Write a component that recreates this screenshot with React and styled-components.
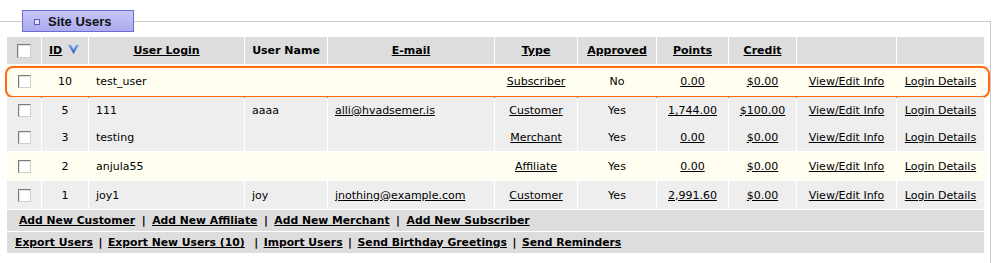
import React from "react";
import styled, { createGlobalStyle } from "styled-components";

const Global = createGlobalStyle`
  html, body { margin: 0; padding: 0; background: #fff; }
  body { font-family: "DejaVu Sans", Verdana, sans-serif; font-size: 11px; color: #000; }
`;

const COLS = "34px 46px 155px 82px 166px 82px 78px 71px 67px 99px 87px";

const Fieldset = styled.fieldset`
  margin: 10px 0 0 0;
  width: 991px;
  box-sizing: border-box;
  border: 1px solid #cccccc;
  border-left: none;
  border-bottom: none;
  padding: 5px 6px 20px 7px;
  min-width: 0;
`;

const Legend = styled.legend`
  margin-left: 15px;
  box-sizing: border-box;
  height: 22px;
  padding: 0 21px 0 11px;
  display: flex;
  align-items: center;
  gap: 8px;
  border: 1px solid #6c6cd4;
  background: linear-gradient(#c6c6f8, #ababee);
  font-family: "Liberation Sans", Arial, sans-serif;
  font-weight: bold;
  font-size: 13px;
  color: #111;
`;

const LegendIcon = styled.span`
  width: 6px;
  height: 6px;
  box-sizing: border-box;
  border: 1px solid #5a5ab8;
  background: #e4e4ff;
  margin-top: 2px;
`;

const Table = styled.div`
  width: 977px;
  display: flex;
  flex-direction: column;
`;

const Row = styled.div`
  position: relative;
  display: grid;
  grid-template-columns: ${COLS};
  column-gap: 1px;
  height: ${(p) => p.$h}px;
  margin-top: ${(p) => p.$gap}px;
  ${(p) =>
    p.$highlight &&
    `
    &::after {
      content: "";
      position: absolute;
      left: -2px;
      right: -6px;
      top: 1px;
      bottom: -1px;
      border: 2px solid #ff6a12;
      border-radius: 8px;
      pointer-events: none;
    }
  `}
`;

const Cell = styled.div`
  display: flex;
  align-items: center;
  justify-content: ${(p) => (p.$align === "left" ? "flex-start" : "center")};
  padding: ${(p) => (p.$align === "left" ? "0 0 0 7px" : "0")};
  background: ${(p) => p.$bg};
  font-weight: ${(p) => (p.$head ? "bold" : "normal")};
  white-space: nowrap;
  overflow: hidden;
`;

const Link = styled.a`
  color: #000;
  text-decoration: underline;
  cursor: pointer;
`;

const Check = styled.span`
  display: inline-block;
  width: ${(p) => (p.$big ? 14 : 13)}px;
  height: ${(p) => (p.$big ? 14 : 13)}px;
  box-sizing: border-box;
  background: #fff;
  border: 1px solid;
  border-color: #7c7c7c #cfcfcf #cfcfcf #7c7c7c;
  box-shadow: inset 1px 1px 0 #e2e2e2;
`;

const Sort = styled.svg`
  margin-left: 6px;
  margin-top: -2px;
`;

const FootRow = styled.div`
  margin-top: 1px;
  height: 21px;
  background: #dddddd;
  display: flex;
  align-items: center;
  padding-left: ${(p) => p.$indent}px;
  font-weight: bold;
  font-size: 10.8px;
  white-space: pre;
`;

const Sep = styled.span`
  margin: 0 ${(p) => p.$m}px 0 ${(p) => (p.$wide ? p.$m + 4 : p.$m)}px;
`;

const HEAD = "#dddddd";
const GREY = "#eeeeee";
const CREAM = "#fffef0";

const rows = [
  { id: "10", login: "test_user", name: "", email: "", type: "Subscriber", ok: "No", pts: "0.00", cr: "$0.00", bg: CREAM, h: 32, gap: 1, hl: true },
  { id: "5", login: "111", name: "aaaa", email: "alli@hvadsemer.is", type: "Customer", ok: "Yes", pts: "1,744.00", cr: "$100.00", bg: GREY, h: 27, gap: 0 },
  { id: "3", login: "testing", name: "", email: "", type: "Merchant", ok: "Yes", pts: "0.00", cr: "$0.00", bg: GREY, h: 27, gap: 0 },
  { id: "2", login: "anjula55", name: "", email: "", type: "Affiliate", ok: "Yes", pts: "0.00", cr: "$0.00", bg: CREAM, h: 28, gap: 1 },
  { id: "1", login: "joy1", name: "joy", email: "jnothing@example.com", type: "Customer", ok: "Yes", pts: "2,991.60", cr: "$0.00", bg: GREY, h: 28, gap: 1 },
];

function SortIcon() {
  return (
    <Sort width="11" height="9" viewBox="0 0 11 9">
      <defs>
        <linearGradient id="sg" x1="0" y1="0" x2="0" y2="1">
          <stop offset="0" stopColor="#7fa6e8" />
          <stop offset="1" stopColor="#2a5cc0" />
        </linearGradient>
      </defs>
      <path d="M0 0 L3.2 0 L5.5 4.6 L7.8 0 L11 0 L5.5 9 Z" fill="url(#sg)" />
    </Sort>
  );
}

export default function App() {
  const foot1 = ["Add New Customer", "Add New Affiliate", "Add New Merchant", "Add New Subscriber"];
  const foot2 = ["Export Users", "Export New Users (10)", "Import Users", "Send Birthday Greetings", "Send Reminders"];
  return (
    <>
      <Global />
      <Fieldset>
        <Legend>
          <LegendIcon />
          Site Users
        </Legend>
        <Table>
          <Row $h={27} $gap={0}>
            <Cell $bg={HEAD} $head><Check $big /></Cell>
            <Cell $bg={HEAD} $head $align="left"><Link>ID</Link><SortIcon /></Cell>
            <Cell $bg={HEAD} $head><Link>User Login</Link></Cell>
            <Cell $bg={HEAD} $head>User Name</Cell>
            <Cell $bg={HEAD} $head><Link>E-mail</Link></Cell>
            <Cell $bg={HEAD} $head><Link>Type</Link></Cell>
            <Cell $bg={HEAD} $head><Link>Approved</Link></Cell>
            <Cell $bg={HEAD} $head><Link>Points</Link></Cell>
            <Cell $bg={HEAD} $head><Link>Credit</Link></Cell>
            <Cell $bg={HEAD} $head />
            <Cell $bg={HEAD} $head />
          </Row>
          {rows.map((r) => (
            <Row key={r.id} $h={r.h} $gap={r.gap} $highlight={r.hl}>
              <Cell $bg={r.bg}><Check /></Cell>
              <Cell $bg={r.bg}>{r.id}</Cell>
              <Cell $bg={r.bg} $align="left">{r.login}</Cell>
              <Cell $bg={r.bg} $align="left">{r.name}</Cell>
              <Cell $bg={r.bg} $align="left">{r.email && <Link>{r.email}</Link>}</Cell>
              <Cell $bg={r.bg}><Link>{r.type}</Link></Cell>
              <Cell $bg={r.bg}>{r.ok}</Cell>
              <Cell $bg={r.bg}><Link>{r.pts}</Link></Cell>
              <Cell $bg={r.bg}><Link>{r.cr}</Link></Cell>
              <Cell $bg={r.bg}><Link>View/Edit Info</Link></Cell>
              <Cell $bg={r.bg}><Link>Login Details</Link></Cell>
            </Row>
          ))}
          <FootRow $indent={12}>
            {foot1.map((t, i) => (
              <React.Fragment key={t}>
                {i > 0 && <Sep $m={6.5}>|</Sep>}
                <Link>{t}</Link>
              </React.Fragment>
            ))}
          </FootRow>
          <FootRow $indent={8}>
            {foot2.map((t, i) => (
              <React.Fragment key={t}>
                {i > 0 && <Sep $m={5.5} $wide={i === 2}>|</Sep>}
                <Link>{t}</Link>
              </React.Fragment>
            ))}
          </FootRow>
        </Table>
      </Fieldset>
    </>
  );
}
